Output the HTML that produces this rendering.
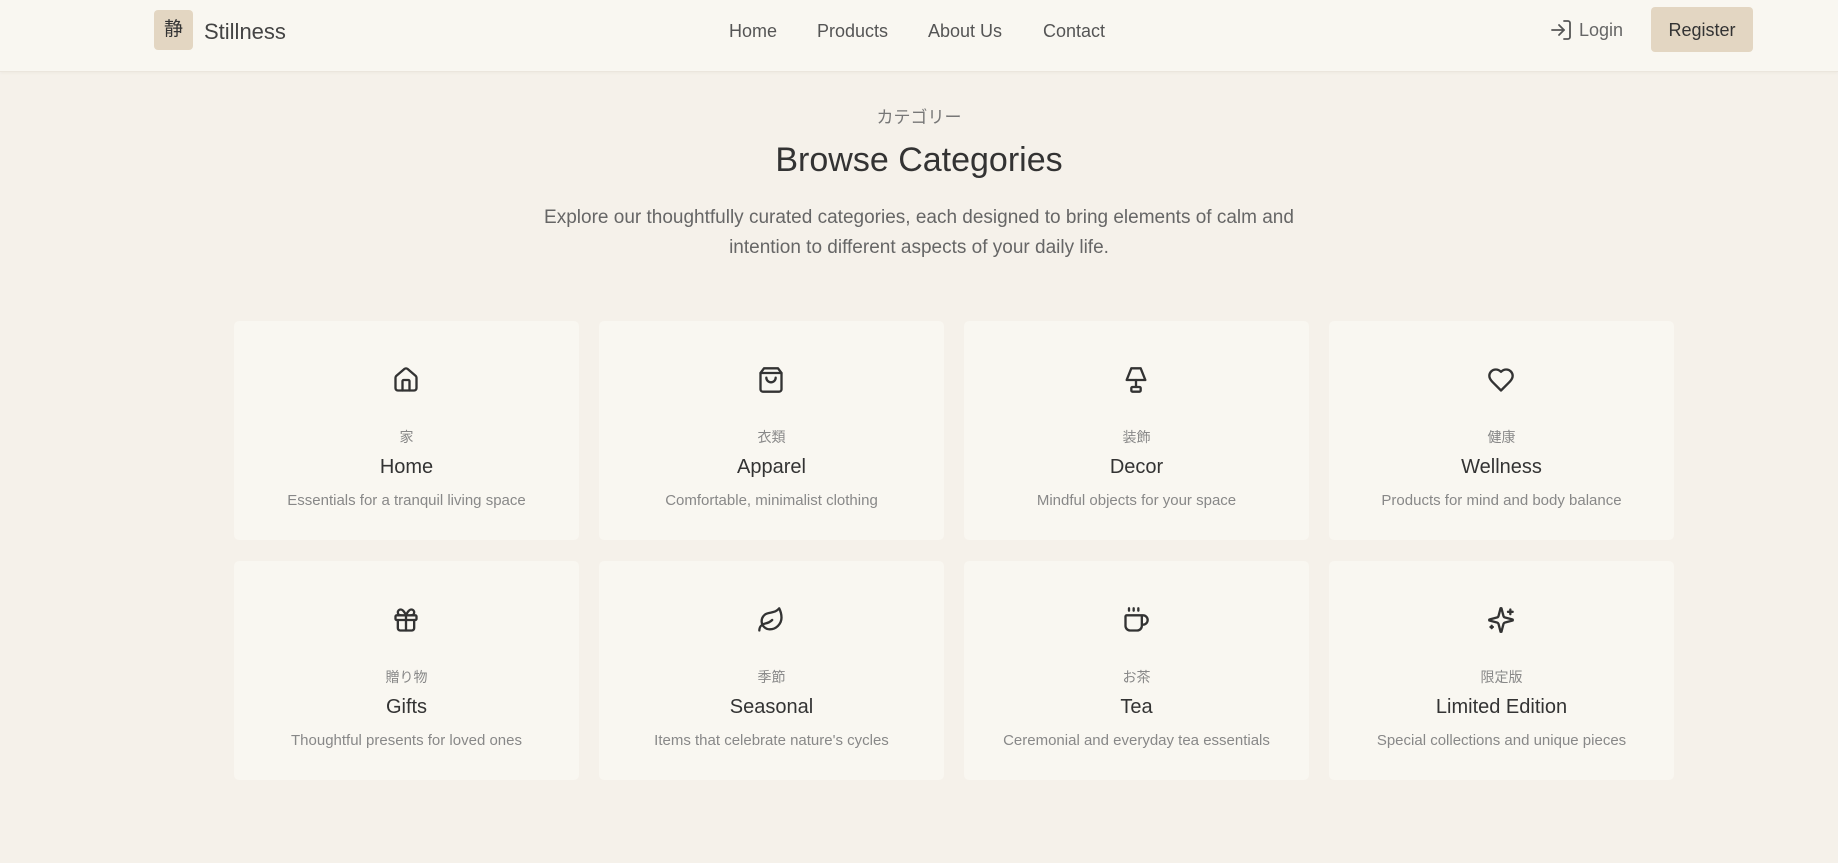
<!DOCTYPE html>
<html><head><meta charset="utf-8"><style>
*{box-sizing:border-box;margin:0;padding:0}
body{width:1838px;height:863px;overflow:hidden;background:#f5f1ea;font-family:"Liberation Sans","Noto Sans CJK JP",sans-serif;color:#333}
header{height:72px;background:#f9f7f1;border-bottom:1px solid #ebe6dd;box-shadow:0 1px 3px rgba(0,0,0,.04);position:relative}
.logo{position:absolute;left:154px;top:10px;width:39px;height:40px;background:#e3d6c2;border-radius:4px;font-size:19px;text-align:center;line-height:40px;color:#333}
.brand{position:absolute;left:204px;top:19px;font-size:22px;color:#444}
nav a{position:absolute;top:21px;font-size:18px;color:#555;text-decoration:none}
.login{position:absolute;left:1549px;top:18px;font-size:18px;color:#666;display:flex;align-items:center;gap:6px}
.reg{position:absolute;left:1651px;top:7px;width:102px;height:45px;background:#e3d6c2;border-radius:4px;font-size:18px;line-height:47px;text-align:center;color:#333}
.jp{position:absolute;top:103px;width:100%;text-align:center;font-size:17px;color:#777}
h1{position:absolute;top:141px;width:100%;text-align:center;font-size:34px;font-weight:normal;color:#333}
p.lead{position:absolute;top:203px;left:514px;width:810px;text-align:center;font-size:19px;line-height:30px;color:#666}
.card{position:absolute;width:345px;height:219px;background:#f9f7f1;border-radius:5px;text-align:center}
.card svg{position:absolute;left:158px;top:45px}
.card .k{position:absolute;top:106px;width:100%;font-size:14px;color:#888}
.card .t{position:absolute;top:135px;width:100%;font-size:20px;color:#333}
.card .d{position:absolute;top:171px;width:100%;font-size:15px;color:#888}
</style></head><body>
<header>
<div class="logo">静</div><div class="brand">Stillness</div>
<nav><a style="left:729px">Home</a><a style="left:817px">Products</a><a style="left:928px">About Us</a><a style="left:1043px">Contact</a></nav>
<div class="login"><svg width="24" height="24" viewBox="0 0 24 24" fill="none" stroke="#555" stroke-width="1.8" stroke-linecap="round" stroke-linejoin="round"><path d="M15 3h4a2 2 0 0 1 2 2v14a2 2 0 0 1-2 2h-4"/><path d="M10 17l5-5-5-5"/><path d="M15 12H3"/></svg>Login</div>
<div class="reg">Register</div>
</header>
<div class="jp">カテゴリー</div>
<h1>Browse Categories</h1>
<p class="lead">Explore our thoughtfully curated categories, each designed to bring elements of calm and intention to different aspects of your daily life.</p>

<div class="card" style="left:234px;top:321px"><svg width="28" height="28" viewBox="0 0 24 24" fill="none" stroke="#333" stroke-width="2" stroke-linecap="round" stroke-linejoin="round"><path d="M15 21v-8a1 1 0 0 0-1-1h-4a1 1 0 0 0-1 1v8"/><path d="M3 10a2 2 0 0 1 .7-1.5l7-6a2 2 0 0 1 2.6 0l7 6A2 2 0 0 1 21 10v9a2 2 0 0 1-2 2H5a2 2 0 0 1-2-2z"/></svg><div class="k">家</div><div class="t">Home</div><div class="d">Essentials for a tranquil living space</div></div>
<div class="card" style="left:599px;top:321px"><svg width="28" height="28" viewBox="0 0 24 24" fill="none" stroke="#333" stroke-width="2" stroke-linecap="round" stroke-linejoin="round"><path d="M6 2L3 6v14a2 2 0 0 0 2 2h14a2 2 0 0 0 2-2V6l-3-4z"/><path d="M3 6h18"/><path d="M16 10a4 4 0 0 1-8 0"/></svg><div class="k">衣類</div><div class="t">Apparel</div><div class="d">Comfortable, minimalist clothing</div></div>
<div class="card" style="left:964px;top:321px"><svg width="28" height="28" viewBox="0 0 24 24" fill="none" stroke="#333" stroke-width="2" stroke-linecap="round" stroke-linejoin="round"><path d="M8 2h8l4 10H4z"/><path d="M12 12v6"/><rect x="8" y="18" width="8" height="4" rx="1"/></svg><div class="k">装飾</div><div class="t">Decor</div><div class="d">Mindful objects for your space</div></div>
<div class="card" style="left:1329px;top:321px"><svg width="28" height="28" viewBox="0 0 24 24" fill="none" stroke="#333" stroke-width="2" stroke-linecap="round" stroke-linejoin="round"><path d="M19 14c1.5-1.5 3-3.2 3-5.5A5.5 5.5 0 0 0 16.5 3c-1.8 0-3 .5-4.5 2-1.5-1.5-2.7-2-4.5-2A5.5 5.5 0 0 0 2 8.5c0 2.3 1.5 4 3 5.5l7 7z"/></svg><div class="k">健康</div><div class="t">Wellness</div><div class="d">Products for mind and body balance</div></div>

<div class="card" style="left:234px;top:561px"><svg width="28" height="28" viewBox="0 0 24 24" fill="none" stroke="#333" stroke-width="2" stroke-linecap="round" stroke-linejoin="round"><rect x="3" y="8" width="18" height="4" rx="1"/><path d="M12 8v13"/><path d="M19 12v7a2 2 0 0 1-2 2H7a2 2 0 0 1-2-2v-7"/><path d="M7.5 8a2.5 2.5 0 0 1 0-5C10 3 12 8 12 8s2-5 4.5-5a2.5 2.5 0 0 1 0 5"/></svg><div class="k">贈り物</div><div class="t">Gifts</div><div class="d">Thoughtful presents for loved ones</div></div>
<div class="card" style="left:599px;top:561px"><svg width="28" height="28" viewBox="0 0 24 24" fill="none" stroke="#333" stroke-width="2" stroke-linecap="round" stroke-linejoin="round"><path d="M11 20A7 7 0 0 1 9.8 6.1C15.5 5 17 4.5 19 2c1 2 2 4.2 2 8 0 5.5-4.8 10-10 10z"/><path d="M2 21c0-3 1.9-5.4 5.1-6C9.5 14.5 12 13 13 12"/></svg><div class="k">季節</div><div class="t">Seasonal</div><div class="d">Items that celebrate nature's cycles</div></div>
<div class="card" style="left:964px;top:561px"><svg width="28" height="28" viewBox="0 0 24 24" fill="none" stroke="#333" stroke-width="2" stroke-linecap="round" stroke-linejoin="round"><path d="M10 2v2"/><path d="M14 2v2"/><path d="M6 2v2"/><path d="M16 8a1 1 0 0 1 1 1v8a4 4 0 0 1-4 4H7a4 4 0 0 1-4-4V9a1 1 0 0 1 1-1h14a4 4 0 1 1 0 8h-1"/></svg><div class="k">お茶</div><div class="t">Tea</div><div class="d">Ceremonial and everyday tea essentials</div></div>
<div class="card" style="left:1329px;top:561px"><svg width="28" height="28" viewBox="0 0 24 24" fill="none" stroke="#333" stroke-width="2" stroke-linecap="round" stroke-linejoin="round"><path d="M9.9 15.5A2 2 0 0 0 8.5 14.1l-6.1-1.6a.5.5 0 0 1 0-1l6.1-1.6A2 2 0 0 0 9.9 8.5l1.6-6.1a.5.5 0 0 1 1 0l1.6 6.1a2 2 0 0 0 1.4 1.4l6.1 1.6a.5.5 0 0 1 0 1l-6.1 1.6a2 2 0 0 0-1.4 1.4l-1.6 6.1a.5.5 0 0 1-1 0z"/><path d="M20 3v4"/><path d="M22 5h-4"/><path d="M4 17v2"/><path d="M5 18H3"/></svg><div class="k">限定版</div><div class="t">Limited Edition</div><div class="d">Special collections and unique pieces</div></div>
</body></html>
